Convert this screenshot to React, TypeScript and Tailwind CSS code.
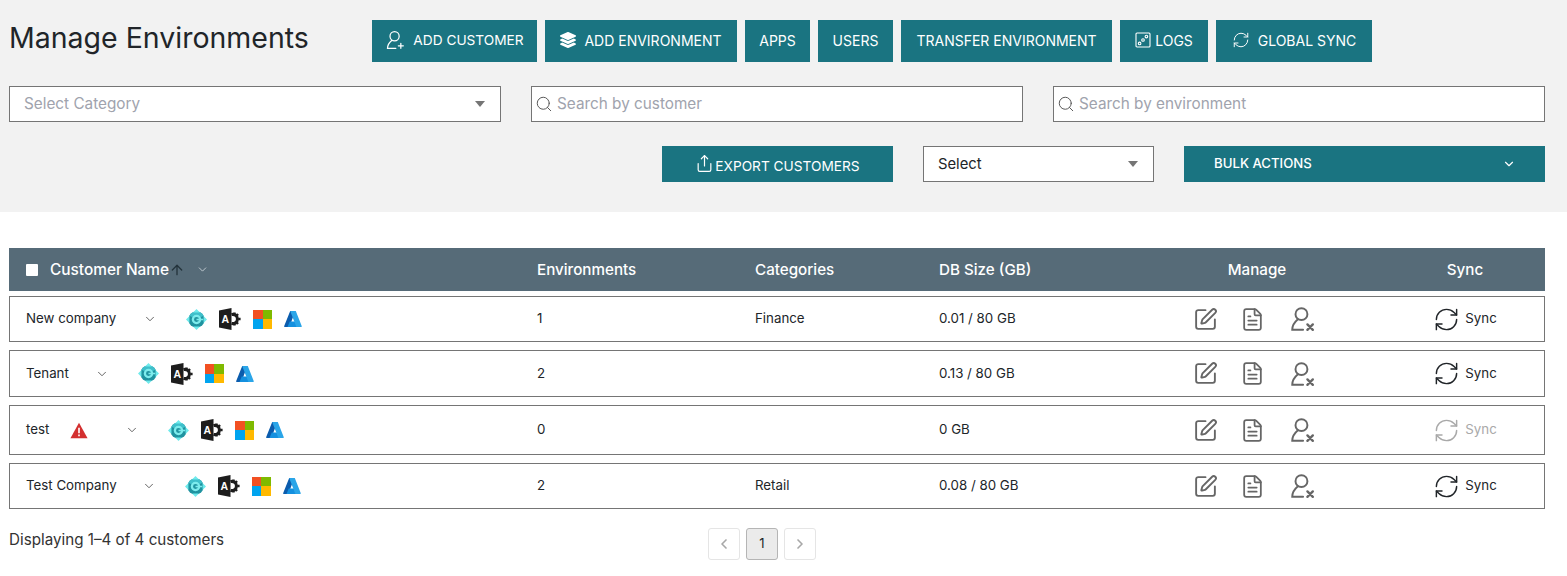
import { ArrowUp, ChevronDown, ChevronLeft, ChevronRight, FileText, RefreshCw, Search, Share, SquarePen } from 'lucide-react'
import { FaLayerGroup } from 'react-icons/fa'

const font = { fontFamily: 'Inter, "Liberation Sans", sans-serif' }

function UserGlyph({ mark, className }: { mark: 'plus' | 'x'; className?: string }) {
  return (
    <svg viewBox="0 0 24 24" className={className} fill="none" stroke="currentColor" strokeWidth={mark === 'x' ? 1.8 : 1.5} strokeLinecap="round">
      <circle cx="11.5" cy="7.5" r="5.5" />
      <path d="M8 12.5C5 15 3 18 3 22H13" />
      {mark === 'plus' ? (
        <path d="M19 16v6M16 19h6" />
      ) : (
        <path d="M17 17l5 5M22 17l-5 5" strokeWidth="2.2" />
      )}
    </svg>
  )
}

function LogsGlyph() {
  return (
    <svg viewBox="0 0 16 16" className="h-[16px] w-[16px]" fill="none" stroke="currentColor" strokeWidth="1.1">
      <rect x="1" y="1" width="14" height="14" rx="1" />
      <circle cx="4.6" cy="11.4" r="1.3" />
      <circle cx="8" cy="8" r="1.3" />
      <circle cx="11.4" cy="4.6" r="1.3" />
    </svg>
  )
}

function BusinessCentral() {
  return (
    <svg viewBox="0 0 22 22" className="h-[21px] w-[21px] shrink-0">
      <circle cx="11" cy="11" r="8.5" fill="#1f93a0" />
      <path d="M3.6 7A8.5 8.5 0 0 1 18.4 7L14.5 9A4.2 4.2 0 0 0 7.5 9z" fill="#3fc0cb" />
      <path d="M11 0l3.6 3.6H7.4zM11 22l-3.6-3.6h7.2zM0 11l3.6-3.6v7.2zM22 11l-3.6 3.6V7.4z" fill="#6feaec" />
      <circle cx="11" cy="11" r="3.8" fill="none" stroke="#7deced" strokeWidth="2.4" />
      <path d="M11 11h7" stroke="#7deced" strokeWidth="1.6" />
    </svg>
  )
}

function ExchangeAdmin() {
  return (
    <svg viewBox="0 0 22 22" className="h-[22px] w-[22px] shrink-0">
      <path d="M0 2.5L12.5 0v22L0 19.5z" fill="#1d1d1d" />
      <text x="2.6" y="15" fontSize="10.5" fontWeight="700" fill="#fff" style={{ fontFamily: '"Liberation Sans", sans-serif' }}>A</text>
      <path d="M12.5 6.6A4.6 4.6 0 1 1 12.5 15.4" fill="none" stroke="#1d1d1d" strokeWidth="3" />
      <path d="M15.5 4.4v3M15.5 14.6v3M19 6l-1.8 2M19 16l-1.8-2M21.6 11h-2.4" stroke="#1d1d1d" strokeWidth="2.4" />
    </svg>
  )
}

function MicrosoftLogo() {
  return (
    <div className="grid h-[19px] w-[19px] shrink-0 grid-cols-2 grid-rows-2">
      <div className="bg-[#f25022]" />
      <div className="bg-[#7fba00]" />
      <div className="bg-[#00a4ef]" />
      <div className="bg-[#ffb900]" />
    </div>
  )
}

function AzureLogo() {
  return (
    <svg viewBox="0 0 18 18" className="h-[18px] w-[18px] shrink-0">
      <path d="M6.2 1h5L5.6 16.6a.8.8 0 0 1-.8.5H.9a.7.7 0 0 1-.7-1z" fill="#0b5cad" />
      <path d="M13.6 11.5H5.7l-2.2 5.6h10.6z" fill="#1490df" />
      <path d="M6.2 1h5.6l5.9 15.1a.7.7 0 0 1-.7 1h-4.6z" fill="#2aa5e8" />
    </svg>
  )
}

function ProductIcons() {
  return (
    <div className="flex items-center gap-[12px]">
      <BusinessCentral />
      <ExchangeAdmin />
      <MicrosoftLogo />
      <AzureLogo />
    </div>
  )
}

function TopButton({ children, gap = 'gap-[8px]', width }: { children: React.ReactNode; gap?: string; width: string }) {
  return (
    <button className={`flex h-[42px] items-center justify-center bg-[#1a7481] pb-[2px] text-[14px] text-white ${gap} ${width}`}>
      {children}
    </button>
  )
}

function SearchBox({ placeholder }: { placeholder: string }) {
  return (
    <div className="flex h-[36px] items-center gap-[4px] border border-[#757575] bg-white pl-[3px]">
      <Search size={18} strokeWidth={1.3} className="text-[#555]" />
      <span className="text-[15.3px] text-[#a0a3ad]">{placeholder}</span>
    </div>
  )
}

function Caret() {
  return <div className="h-0 w-0 border-x-[5.5px] border-t-[6px] border-x-transparent border-t-[#757575]" />
}

type Customer = {
  name: string
  warn?: boolean
  chevronGap: string
  envs: string
  category: string
  size: string
  height: string
  syncOff?: boolean
}

const customers: Customer[] = [
  { name: 'New company', chevronGap: 'ml-[27px]', envs: '1', category: 'Finance', size: '0.01 / 80 GB', height: 'h-[46px]' },
  { name: 'Tenant', chevronGap: 'ml-[26px]', envs: '2', category: '', size: '0.13 / 80 GB', height: 'h-[47px]' },
  { name: 'test', warn: true, chevronGap: 'ml-[37px]', envs: '0', category: '', size: '0 GB', height: 'h-[50px]', syncOff: true },
  { name: 'Test Company', chevronGap: 'ml-[25px]', envs: '2', category: 'Retail', size: '0.08 / 80 GB', height: 'h-[46px]' },
]

export default function App() {
  return (
    <div className="h-[576px] overflow-hidden bg-white text-[#212529]" style={font}>
      <div className="h-[212px] bg-[#f2f2f2] px-[9px] pt-[20px] pr-[22px]">
        <div className="flex items-start">
          <h1 className="w-[363px] text-[28.5px] leading-[36px] text-[#212529]">Manage Environments</h1>
          <div className="flex gap-[8px]">
            <TopButton width="w-[165px]"><UserGlyph mark="plus" className="h-[20px] w-[20px]" /><span className="text-[13.7px]">ADD CUSTOMER</span></TopButton>
            <TopButton width="w-[192px]"><FaLayerGroup size={16} />ADD ENVIRONMENT</TopButton>
            <TopButton width="w-[65px]">APPS</TopButton>
            <TopButton width="w-[75px]">USERS</TopButton>
            <TopButton width="w-[211px]">TRANSFER ENVIRONMENT</TopButton>
            <TopButton width="w-[88px]" gap="gap-[4px]"><LogsGlyph />LOGS</TopButton>
            <TopButton width="w-[156px]"><RefreshCw size={18} strokeWidth={1.3} />GLOBAL SYNC</TopButton>
          </div>
        </div>
        <div className="mt-[24px] grid w-[1536px] grid-cols-3 gap-[30px]">
          <div className="flex h-[36px] items-center justify-between border border-[#757575] bg-white pr-[15px] pl-[14px]">
            <span className="text-[15.3px] text-[#a0a3ad]">Select Category</span>
            <Caret />
          </div>
          <SearchBox placeholder="Search by customer" />
          <SearchBox placeholder="Search by environment" />
        </div>
        <div className="mt-[24px] flex w-[1536px] justify-end gap-[30px]">
          <button className="flex h-[36px] w-[231px] items-center justify-center gap-[1px] bg-[#1a7481] pt-[5px] text-[13.7px] text-white">
            <Share size={19} strokeWidth={1.5} className="-mt-[6px]" />EXPORT CUSTOMERS
          </button>
          <div className="flex h-[36px] w-[231px] items-center justify-between border border-[#757575] bg-white pr-[15px] pl-[14px]">
            <span className="text-[14.8px] text-[#212529]">Select</span>
            <Caret />
          </div>
          <button className="flex h-[36px] w-[361px] items-center justify-between bg-[#1a7481] pr-[29px] pb-[1px] pl-[30px] text-[13.2px] font-medium text-white">
            BULK ACTIONS
            <ChevronDown size={14} />
          </button>
        </div>
      </div>

      <div className="mx-[9px] mt-[36px] w-[1536px]">
        <div className="grid h-[43px] grid-cols-[528px_218px_184px_190px_256px_160px] items-center bg-[#566b78] pt-[1px] text-[15.2px] font-medium text-white">
          <div className="flex items-center pl-[17px]">
            <div className="mr-[12px] h-[12px] w-[12px] rounded-[1px] bg-white" />
            <span className="text-[15.4px]">Customer Name</span>
            <ArrowUp size={16} className="text-[#24343c]" />
            <ChevronDown size={13} strokeWidth={1.5} className="ml-[11px] text-[#d5dde2]" />
          </div>
          <div>Environments</div>
          <div>Categories</div>
          <div>DB Size (GB)</div>
          <div className="text-center">Manage</div>
          <div className="text-center">Sync</div>
        </div>

        <div className="mt-[5px] flex flex-col gap-[8px]">
          {customers.map((c) => (
            <div key={c.name} className={`grid grid-cols-[527px_218px_184px_190px_256px_159px] items-center ${c.height} border border-[#757575] text-[13.3px] text-[#212529]`}>
              <div className="flex items-center pl-[16px]">
                <span>{c.name}</span>
                {c.warn && (
                  <svg viewBox="0 0 20 18" className="ml-[21px] h-[17px] w-[18px]">
                    <path d="M10 .5L19.5 17.5H.5z" fill="#d32f2f" />
                    <path d="M10 6v6M10 13.5v2" stroke="#fff" strokeWidth="1.8" />
                  </svg>
                )}
                <ChevronDown size={14} strokeWidth={1.4} className={`mr-[29px] text-[#444] ${c.chevronGap}`} />
                <ProductIcons />
              </div>
              <div>{c.envs}</div>
              <div>{c.category}</div>
              <div>{c.size}</div>
              <div className="flex items-center justify-center pr-[6px] text-[#666]">
                <SquarePen size={25} strokeWidth={1.8} />
                <FileText size={25} strokeWidth={1.7} className="ml-[22px]" />
                <UserGlyph mark="x" className="ml-[24px] h-[26px] w-[26px]" />
              </div>
              <div className={`flex items-center justify-center gap-[5px] pl-[1px] ${c.syncOff ? 'text-[#a9a9a9]' : 'text-[#212529]'}`}>
                <RefreshCw size={27} strokeWidth={1.3} />
                <span>Sync</span>
              </div>
            </div>
          ))}
        </div>

        <div className="relative mt-[19px] flex h-[32px] items-start">
          <span className="mt-[1px] text-[15.2px] text-[#333]">Displaying 1–4 of 4 customers</span>
          <div className="absolute left-[699px] top-0 flex gap-[6px]">
            <div className="flex h-[32px] w-[32px] items-center justify-center rounded-[3px] border border-[#e5e5e5] text-[#a8a8a8]"><ChevronLeft size={16} strokeWidth={2.5} /></div>
            <div className="flex h-[32px] w-[32px] items-center justify-center rounded-[3px] border border-[#b5b5b5] bg-[#ebebeb] text-[13px]">1</div>
            <div className="flex h-[32px] w-[32px] items-center justify-center rounded-[3px] border border-[#e5e5e5] text-[#a8a8a8]"><ChevronRight size={16} strokeWidth={2.5} /></div>
          </div>
        </div>
      </div>
    </div>
  )
}
